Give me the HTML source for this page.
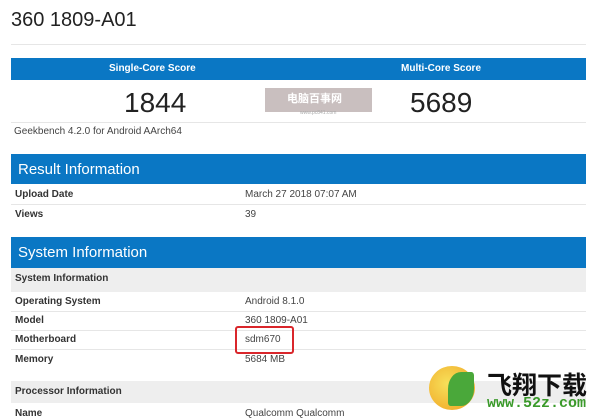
<!DOCTYPE html>
<html><head><meta charset="utf-8"><style>
body{margin:0;width:600px;height:420px;overflow:hidden;background:#fff;font-family:"Liberation Sans","Noto Sans CJK SC",sans-serif;color:#333;position:relative}
.a{position:absolute}
.bar{position:absolute;left:11px;width:575px;background:#0a77c4;color:#fff}
.lab{position:absolute;left:15px;font-size:10px;font-weight:bold;color:#333}
.val{position:absolute;left:245px;font-size:10px;color:#444}
.ln{position:absolute;left:11px;width:575px;height:1px;background:#e6e6e6}
.gray{position:absolute;left:11px;width:575px;background:#eeeeee}
</style></head><body>
<div class="a" style="left:11px;top:9px;font-size:20px;color:#222">360 1809-A01</div>
<div class="ln" style="top:44px"></div>
<div class="bar" style="top:58px;height:22px;font-size:10px;font-weight:bold">
<span class="a" style="left:98px;top:5px">Single-Core Score</span>
<span class="a" style="left:390px;top:5px">Multi-Core Score</span></div>
<div class="a" style="left:124px;top:87px;font-size:28px;color:#222">1844</div>
<div class="a" style="left:410px;top:87px;font-size:28px;color:#222">5689</div>
<div class="a" style="left:265px;top:88px;width:107px;height:24px;background:#c9bfbf"></div>
<div class="a" style="left:287px;top:90px;font-size:11px;font-weight:bold;color:#fff">电脑百事网</div>
<div class="a" style="left:300px;top:110px;font-size:5px;color:#aaa">www.pc841.com</div>
<div class="ln" style="top:122px"></div>
<div class="a" style="left:14px;top:126px;font-size:10px;color:#444">Geekbench 4.2.0 for Android AArch64</div>
<div class="bar" style="top:154px;height:30px;font-size:15px"><span class="a" style="left:7px;top:7px">Result Information</span></div>
<div class="lab" style="top:189px">Upload Date</div><div class="val" style="top:189px">March 27 2018 07:07 AM</div>
<div class="ln" style="top:204px"></div>
<div class="lab" style="top:209px">Views</div><div class="val" style="top:209px">39</div>
<div class="bar" style="top:237px;height:31px;font-size:15px"><span class="a" style="left:7px;top:7px">System Information</span></div>
<div class="gray" style="top:268px;height:24px"></div>
<div class="lab" style="top:273px">System Information</div>
<div class="lab" style="top:296px">Operating System</div><div class="val" style="top:296px">Android 8.1.0</div>
<div class="ln" style="top:311px"></div>
<div class="lab" style="top:315px">Model</div><div class="val" style="top:315px">360 1809-A01</div>
<div class="ln" style="top:330px"></div>
<div class="lab" style="top:334px">Motherboard</div><div class="val" style="top:334px">sdm670</div>
<div class="ln" style="top:349px"></div>
<div class="lab" style="top:354px">Memory</div><div class="val" style="top:354px">5684 MB</div>
<div class="a" style="left:235px;top:326px;width:55px;height:24px;border:2px solid #d9262b;border-radius:3px"></div>
<div class="gray" style="top:381px;height:22px"></div>
<div class="lab" style="top:386px">Processor Information</div>
<div class="lab" style="top:408px">Name</div><div class="val" style="top:408px">Qualcomm Qualcomm</div>
<div class="a" style="left:429px;top:366px;width:46px;height:44px;border-radius:50%;background:radial-gradient(circle at 40% 40%,#f7e05a,#f0a020)"></div>
<div class="a" style="left:448px;top:372px;width:26px;height:34px;border-radius:50% 10% 50% 10%;background:#4aa83a"></div>
<div class="a" style="left:487px;top:366px;font-size:25px;font-weight:bold;color:#111">飞翔下载</div>
<div class="a" style="left:487px;top:395px;font-size:15px;font-weight:bold;color:#3a9a2a;font-family:'Liberation Mono',monospace">www.52z.com</div>
</body></html>
